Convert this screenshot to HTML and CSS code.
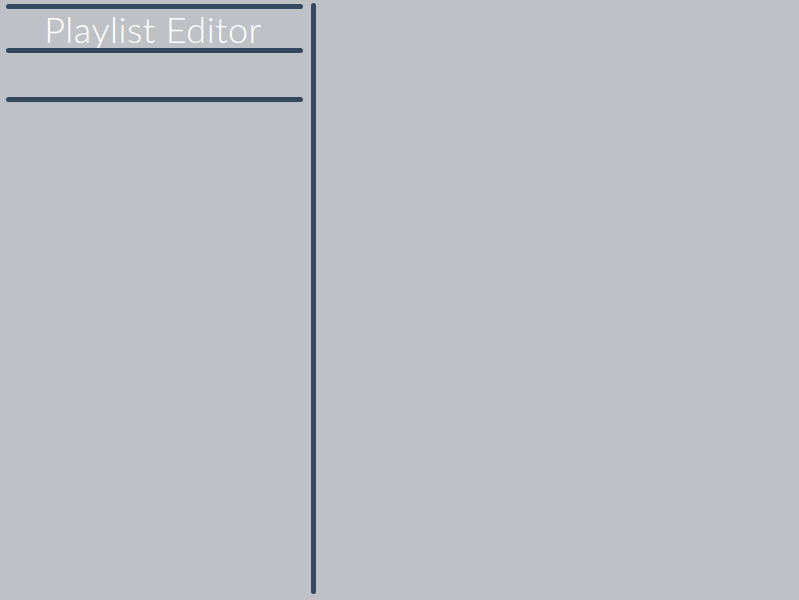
FILE: index.html
```html
<!DOCTYPE html>
<html>
<head>
<meta charset="utf-8">
<link rel="stylesheet" href="styles.css">
</head>
<body>
<div class="app">
  <aside class="sidebar">
    <div class="rule"></div>
    <h1 class="title">Playlist Editor</h1>
    <div class="rule"></div>
    <div class="list"></div>
    <div class="rule"></div>
  </aside>
  <div class="divider"></div>
  <main class="content"></main>
</div>
</body>
</html>
```
FILE: styles.css
```css
html, body {
  margin: 0;
  padding: 0;
  height: 100%;
  background: #bec2c6;
}
.app {
  display: flex;
  height: 600px;
  padding: 3px 0 6px 6px;
  box-sizing: border-box;
  gap: 8px;
}
.sidebar {
  width: 297px;
  display: flex;
  flex-direction: column;
  padding-top: 1px;
}
.rule {
  height: 5px;
  background: #34495e;
  border-radius: 3px;
}
.title {
  margin: 0;
  height: 39px;
  padding-right: 3px;
  font-family: Lato, sans-serif;
  font-weight: 300;
  font-size: 36px;
  letter-spacing: 0.5px;
  line-height: 40px;
  color: #ffffff;
  text-align: center;
  overflow: visible;
  white-space: nowrap;
}
.list {
  height: 44px;
}
.divider {
  width: 5px;
  background: #34495e;
  border-radius: 3px;
}
.content {
  flex: 1;
}
```
